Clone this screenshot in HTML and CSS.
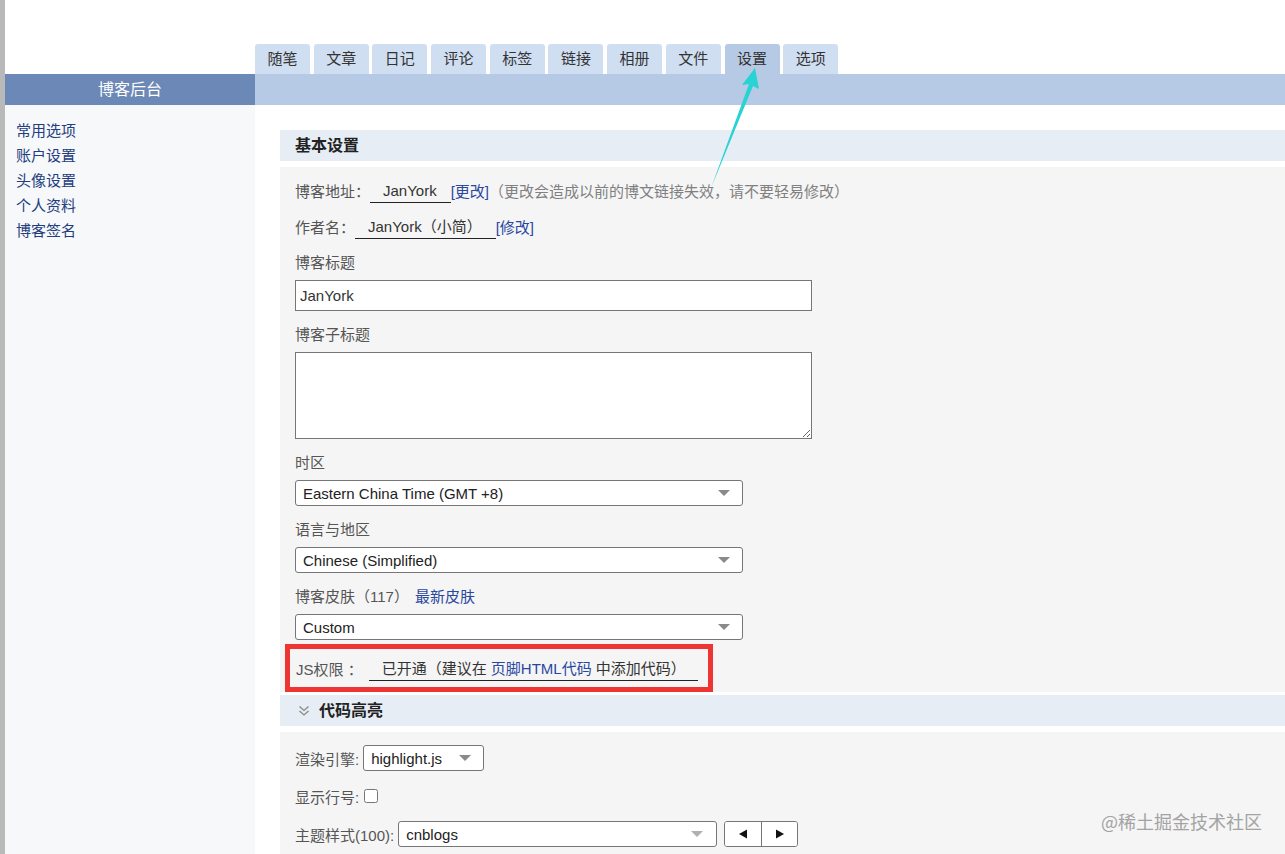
FILE: index.html
```html
<!DOCTYPE html>
<html lang="zh-CN">
<head>
  <meta charset="UTF-8">
  <title>博客后台 - 设置</title>
  <link rel="stylesheet" href="styles.css">
</head>
<body>

<div class="layout">
  <div class="strip"></div>

  <aside class="sidebar">
    <div class="sidebar-top"></div>
    <div class="sidebar-title">博客后台</div>
    <ul class="side-nav">
      <li><a href="#">常用选项</a></li>
      <li><a href="#">账户设置</a></li>
      <li><a href="#">头像设置</a></li>
      <li><a href="#">个人资料</a></li>
      <li><a href="#">博客签名</a></li>
    </ul>
  </aside>

  <main class="main">
    <nav class="tabs">
      <a class="tab" href="#">随笔</a>
      <a class="tab" href="#">文章</a>
      <a class="tab" href="#">日记</a>
      <a class="tab" href="#">评论</a>
      <a class="tab" href="#">标签</a>
      <a class="tab" href="#">链接</a>
      <a class="tab" href="#">相册</a>
      <a class="tab" href="#">文件</a>
      <a class="tab active" href="#">设置</a>
      <a class="tab" href="#">选项</a>
    </nav>
    <div class="tab-bar"></div>

    <div class="content">
      <section class="box">
        <h3 class="box-title">基本设置</h3>
        <div class="box-body">
          <div class="info-row">
            <span>博客地址：</span>
            <span class="underline">JanYork</span>
            <a class="link" href="#">[更改]</a>
            <span class="hint">（更改会造成以前的博文链接失效，请不要轻易修改）</span>
          </div>
          <div class="info-row">
            <span>作者名：</span>
            <span class="underline">JanYork（小简）</span>
            <a class="link" href="#">[修改]</a>
          </div>

          <div class="field first">
            <label for="title">博客标题</label>
            <input id="title" class="text-input" type="text" value="JanYork">
          </div>
          <div class="field">
            <label for="subtitle">博客子标题</label>
            <textarea id="subtitle" class="text-area"></textarea>
          </div>
          <div class="field">
            <label for="tz">时区</label>
            <div class="select-wrap wide">
              <select id="tz"><option>Eastern China Time (GMT +8)</option></select>
            </div>
          </div>
          <div class="field">
            <label for="lang">语言与地区</label>
            <div class="select-wrap wide">
              <select id="lang"><option>Chinese (Simplified)</option></select>
            </div>
          </div>
          <div class="field tight">
            <label for="skin">博客皮肤（117） <a class="link skin-link" href="#">最新皮肤</a></label>
            <div class="select-wrap wide">
              <select id="skin"><option>Custom</option></select>
            </div>
          </div>

          <div class="js-row">
            <span>JS权限 ：</span>
            <span class="underline js-text">已开通（建议在 <a class="link" href="#">页脚HTML代码</a> 中添加代码）</span>
          </div>
        </div>
      </section>

      <section class="box">
        <h3 class="box-title">
          <svg class="chevrons" width="12" height="12" viewBox="0 0 12 12">
            <polyline points="1.5,1.5 6,5.5 10.5,1.5" fill="none" stroke="#8a8a8a" stroke-width="1.3"/>
            <polyline points="1.5,6 6,10 10.5,6" fill="none" stroke="#8a8a8a" stroke-width="1.3"/>
          </svg>
          代码高亮
        </h3>
        <div class="box-body hl-body">
          <div class="hl-row">
            <label for="engine">渲染引擎:</label>
            <div class="select-wrap engine">
              <select id="engine"><option>highlight.js</option></select>
            </div>
          </div>
          <div class="hl-row">
            <label for="lineno">显示行号:</label>
            <input id="lineno" class="check" type="checkbox">
          </div>
          <div class="hl-row">
            <label for="theme">主题样式(100):</label>
            <div class="select-wrap theme">
              <select id="theme"><option>cnblogs</option></select>
            </div>
            <div class="pager">
              <button type="button" class="pager-btn">
                <svg width="10" height="10" viewBox="0 0 10 10"><polygon points="9,0.5 9,9.5 1,5" fill="#111"/></svg>
              </button>
              <button type="button" class="pager-btn">
                <svg width="10" height="10" viewBox="0 0 10 10"><polygon points="1,0.5 1,9.5 9,5" fill="#111"/></svg>
              </button>
            </div>
          </div>
        </div>
      </section>
    </div>
  </main>
</div>

<!-- 标注箭头 -->
<svg class="arrow" width="1285" height="854" viewBox="0 0 1285 854">
  <polygon points="755,68 742,85 749,84 711,188 753,86 759,89" fill="#27d3d3"/>
</svg>

<div class="watermark">@稀土掘金技术社区</div>

</body>
</html>
```

FILE: styles.css
```css
html, body {
  margin: 0;
  padding: 0;
  overflow: hidden;
}

body {
  font-family: "Liberation Sans", "Noto Sans CJK SC", sans-serif;
  font-size: 15px;
  color: #333;
  background: #fff;
}

a {
  text-decoration: none;
}

.layout {
  display: flex;
  min-height: 854px;
}

.strip {
  width: 5px;
  background: #b9b9b9;
  flex-shrink: 0;
}

/* 左侧栏 */
.sidebar {
  width: 250px;
  flex-shrink: 0;
  background: #f7f8fa;
}

.sidebar-top {
  height: 74px;
  background: #fff;
}

.sidebar-title {
  height: 31px;
  line-height: 31px;
  background: #6c88b6;
  color: #fff;
  text-align: center;
  font-size: 16px;
}

.side-nav {
  list-style: none;
  margin: 0;
  padding: 13px 0 0 11px;
}

.side-nav li {
  line-height: 25px;
}

.side-nav a {
  color: #233d7e;
  font-size: 15px;
}

/* 主区域 */
.main {
  flex: 1;
}

.tabs {
  display: flex;
  margin-top: 44px;
  height: 30px;
}

.tab {
  width: 55px;
  margin-right: 3.7px;
  line-height: 30px;
  text-align: center;
  background: #d0def2;
  color: #333;
  font-size: 15px;
  border-radius: 3px 3px 0 0;
}

.tab.active {
  background: #b6c9e5;
}

.tab-bar {
  height: 31px;
  background: #b6c9e5;
}

.content {
  padding: 25px 0 0 25px;
}

.box-title {
  margin: 0 0 6px;
  height: 31px;
  line-height: 31px;
  padding-left: 15px;
  background: #e6edf5;
  font-size: 16px;
  font-weight: bold;
  color: #222;
  display: flex;
  align-items: center;
}

.chevrons {
  margin: 0 9px 0 3px;
}

.box-body {
  background: #f5f5f5;
  padding: 5px 0 0 15px;
  margin-bottom: 6px;
  color: #555;
}

.info-row {
  height: 36px;
  display: flex;
  align-items: center;
}

.underline {
  border-bottom: 1px solid #222;
  padding: 0 14px 0 13px;
  line-height: 23px;
  margin-top: 1px;
  color: #333;
}

.link {
  color: #2a48a0;
}

.hint {
  color: #808080;
}

.field {
  margin-bottom: 14px;
}

.field.first {
  margin-top: 9px;
}

.field.tight {
  margin-bottom: 4px;
}

.field label {
  display: block;
  line-height: 20px;
  margin-bottom: 7px;
}

.skin-link {
  margin-left: 2px;
}

.text-input,
.text-area {
  box-sizing: border-box;
  width: 517px;
  border: 1px solid #767676;
  background: #fff;
  font-family: "Liberation Sans", "Noto Sans CJK SC", sans-serif;
  font-size: 15px;
  color: #333;
  padding: 0 4px;
  margin: 0;
  display: block;
}

.text-input {
  height: 31px;
}

.text-area {
  height: 87px;
}

.select-wrap {
  position: relative;
  height: 26px;
}

.select-wrap.wide {
  width: 448px;
}

.select-wrap.engine {
  width: 121px;
}

.select-wrap.theme {
  width: 319px;
}

.select-wrap select {
  appearance: none;
  box-sizing: border-box;
  width: 100%;
  height: 100%;
  margin: 0;
  border: 1px solid #767676;
  border-radius: 3px;
  background: #fff;
  padding: 0 30px 0 7px;
  font-family: "Liberation Sans", "Noto Sans CJK SC", sans-serif;
  font-size: 15px;
  color: #222;
}

.select-wrap::after {
  content: "";
  position: absolute;
  right: 13px;
  top: 10px;
  border-left: 6px solid transparent;
  border-right: 6px solid transparent;
  border-top: 6px solid #8a8a8a;
  pointer-events: none;
}

.select-wrap.theme::after {
  border-top-color: #b0b0b0;
  right: 14px;
}

.js-row {
  box-sizing: border-box;
  width: 428px;
  height: 48px;
  margin-left: -10px;
  margin-bottom: -3px;
  border: 5px solid #ef3434;
  padding-left: 6px;
  display: flex;
  align-items: center;
  font-size: 15px;
  position: relative;
}

.js-text {
  margin-left: 6px;
  padding: 0 12px 0 13px;
  margin-top: 2px;
}

/* 代码高亮 */
.hl-body {
  padding-top: 13px;
  padding-bottom: 10px;
}

.hl-row {
  display: flex;
  align-items: center;
  height: 26px;
  margin-bottom: 12px;
}

.hl-row label {
  margin-right: 4px;
}

.check {
  width: 14px;
  height: 14px;
  margin: 0 0 0 1px;
}

.pager {
  display: flex;
  margin-left: 7px;
  height: 26px;
  border: 1px solid #767676;
  border-radius: 3px;
  box-sizing: border-box;
  background: #fff;
  overflow: hidden;
}

.pager-btn {
  width: 36px;
  border: none;
  background: #fff;
  padding: 0;
  display: flex;
  align-items: center;
  justify-content: center;
}

.pager-btn + .pager-btn {
  border-left: 1px solid #767676;
}

/* 覆盖层 */
.arrow {
  position: absolute;
  left: 0;
  top: 0;
  pointer-events: none;
}

.watermark {
  position: absolute;
  right: 23px;
  top: 808px;
  font-size: 18px;
  color: #a3a3a3;
  font-family: "Noto Sans CJK SC", sans-serif;
}
```
